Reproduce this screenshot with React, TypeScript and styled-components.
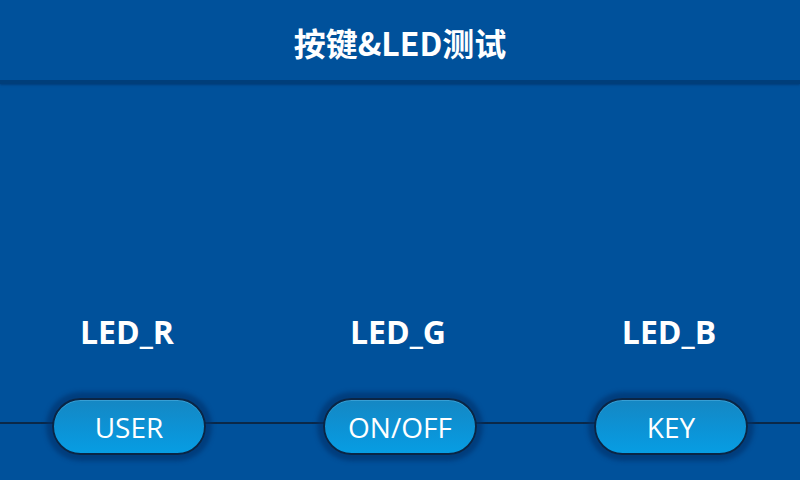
import styled, { createGlobalStyle } from 'styled-components'

const GlobalStyle = createGlobalStyle`
  html, body {
    margin: 0;
    padding: 0;
  }
  body {
    background: #00519b;
    font-family: "Open Sans", "Noto Sans", "Noto Sans CJK SC", sans-serif;
  }
`

const channels = [
  { led: 'LED_R', key: 'USER' },
  { led: 'LED_G', key: 'ON/OFF' },
  { led: 'LED_B', key: 'KEY' }
]

export default function App() {
  return (
    <>
      <GlobalStyle />
      <Screen>
        <Header>
          <Title>按键&amp;LED测试</Title>
        </Header>
        <Body>
          <Columns>
            {channels.map((c) => (
              <LedLabel key={c.led}>{c.led}</LedLabel>
            ))}
          </Columns>
          <KeyRow>
            <Columns>
              {channels.map((c) => (
                <KeyButton key={c.key}>{c.key}</KeyButton>
              ))}
            </Columns>
          </KeyRow>
        </Body>
      </Screen>
    </>
  )
}

const Screen = styled.div`
  width: 800px;
  height: 480px;
  display: flex;
  flex-direction: column;
  background: #00519b;
  overflow: hidden;
`

const Header = styled.header`
  height: 80px;
  flex: none;
  display: flex;
  align-items: center;
  justify-content: center;
  border-bottom: 4px solid #003e7a;
  box-shadow: 0 1px 2px rgba(0, 40, 90, 0.5);
`

const Title = styled.h1`
  margin: 0;
  padding-top: 4px;
  color: #ffffff;
  font-family: "Noto Sans CJK SC", "Noto Sans", sans-serif;
  font-size: 32px;
  font-weight: 700;
  letter-spacing: 0;
`

const Body = styled.main`
  flex: 1;
  display: flex;
  flex-direction: column;
  justify-content: flex-end;
  padding-bottom: 25px;
`

const Columns = styled.div`
  display: grid;
  grid-template-columns: repeat(3, 154px);
  column-gap: 117px;
  justify-content: center;
  align-items: center;
`

const LedLabel = styled.div`
  text-align: center;
  color: #ffffff;
  font-size: 32px;
  font-weight: 700;
  line-height: 40px;
  margin-bottom: 46px;
  margin-left: -4px;
`

const KeyRow = styled.div`
  background: linear-gradient(
    to bottom,
    transparent 0,
    transparent 24px,
    #0b2848 24px,
    #0b2848 26px,
    transparent 26px
  );
`

const KeyButton = styled.button`
  height: 57px;
  width: 154px;
  box-sizing: border-box;
  border: 2px solid #0a2545;
  border-radius: 29px;
  background: linear-gradient(to bottom, #1587c3 0%, #0c93d6 55%, #079de3 100%);
  box-shadow: 0 0 4px 6px rgba(0, 48, 105, 0.6), inset 0 1px 0 rgba(120, 200, 240, 0.35);
  color: #ffffff;
  font-family: "Open Sans", "Noto Sans", sans-serif;
  font-size: 28px;
  font-weight: 400;
  padding: 0;
  cursor: pointer;
`
